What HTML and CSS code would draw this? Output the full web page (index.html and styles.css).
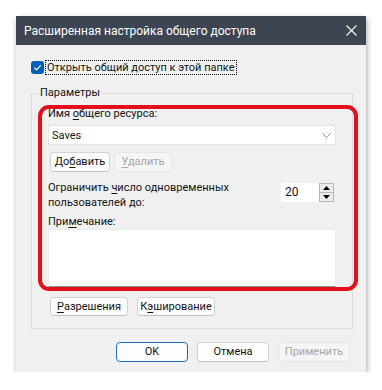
FILE: index.html
```html
<!DOCTYPE html>
<html lang="ru">
<head>
<meta charset="utf-8">
<link rel="stylesheet" href="styles.css">
</head>
<body>
<div class="dialog">
  <div class="titlebar">
    <span class="title">Расширенная настройка общего доступа</span>
    <svg class="close" width="11" height="11" viewBox="0 0 11 11"><path d="M0.5 0.5 L10.5 10.5 M10.5 0.5 L0.5 10.5" stroke="#fff" stroke-width="1.1" fill="none"/></svg>
  </div>
  <div class="content">
    <label class="check-row">
      <span class="checkbox"><svg width="9" height="9" viewBox="0 0 9 9"><path d="M1.3 4.6 L3.6 6.8 L7.8 2.2" stroke="#fff" stroke-width="1.2" fill="none"/></svg></span>
      <span class="focus">Открыть общий доступ к этой папке</span>
    </label>
    <fieldset class="group">
      <legend>Параметры</legend>
      <div class="lbl first">Имя <u>о</u>бщего ресурса:</div>
      <div class="combo"><span>Saves</span>
        <svg width="9" height="5" viewBox="0 0 9 5"><path d="M0.5 0.5 L4.5 4.5 L8.5 0.5" stroke="#9a9a9a" stroke-width="1" fill="none"/></svg>
      </div>
      <div class="btn-row">
        <button class="btn w60">До<u>б</u>авить</button>
        <button class="btn w58 disabled"><u>У</u>далить</button>
      </div>
      <div class="limit-row">
        <div class="limit-text">Ограничить <u>ч</u>исло одновременных<br>пользователей до:</div>
        <div class="spin">
          <span class="spin-val">20</span>
          <span class="spin-btns">
            <span class="spin-btn"><svg width="7" height="4" viewBox="0 0 7 4"><path d="M3.5 0 L7 4 L0 4 Z" fill="#000"/></svg></span>
            <span class="spin-btn"><svg width="7" height="4" viewBox="0 0 7 4"><path d="M0 0 L7 0 L3.5 4 Z" fill="#000"/></svg></span>
          </span>
        </div>
      </div>
      <div class="lbl note-lbl">При<u>м</u>ечание:</div>
      <div class="textarea"></div>
      <div class="btn-row perm-row">
        <button class="btn w78"><u>Р</u>азрешения</button>
        <button class="btn w78">К<u>э</u>ширование</button>
      </div>
    </fieldset>
    <div class="footer">
      <button class="btn fbtn primary">OK</button>
      <button class="btn fbtn">Отмена</button>
      <button class="btn fbtn disabled">Применить</button>
    </div>
  </div>
  <div class="highlight"></div>
</div>
</body>
</html>
```
FILE: styles.css
```css
html, body {
  margin: 0;
  padding: 0;
  background: #ffffff;
}
body {
  font-family: Roboto, "Noto Sans", sans-serif;
  font-size: 11px;
  color: #141414;
}
.dialog {
  position: relative;
  margin: 16px 0 0 16px;
  width: 350px;
  height: 356px;
  background: #f0f0f0;
  box-shadow: 1px 3px 6px rgba(0, 0, 0, 0.35);
  display: flex;
  flex-direction: column;
}
.titlebar {
  height: 29px;
  background: #3d4452;
  color: #fff;
  display: flex;
  align-items: center;
  justify-content: space-between;
  padding: 0 9px 0 8px;
  flex: none;
}
.title {
  font-size: 12px;
}
.content {
  padding: 0 16px 0 15px;
  display: flex;
  flex-direction: column;
}
.check-row {
  margin-top: 16px;
  height: 13px;
  display: flex;
  align-items: center;
  gap: 2px;
}
.checkbox {
  width: 13px;
  height: 13px;
  border-radius: 3px;
  background: #005fb8;
  display: flex;
  align-items: center;
  justify-content: center;
}
.focus {
  outline: 1px dotted #000;
  line-height: 13px;
  padding: 0 1px;
}
.group {
  margin: 11px 0 0 0;
  padding: 0 16px 12px 16px;
  border: 1px solid #dcdcdc;
  width: 322px;
  box-sizing: border-box;
  min-width: 0;
}
.group legend {
  margin-left: -10px;
  padding: 0 2px;
  line-height: 16px;
  font-size: 11px;
}
.lbl {
  line-height: 15px;
}
.lbl.first {
  margin-top: 5px;
}
.combo {
  margin-top: 4px;
  height: 20px;
  background: #fff;
  border: 1px solid #e4e4e4;
  border-radius: 2px;
  box-sizing: border-box;
  display: flex;
  align-items: center;
  justify-content: space-between;
  padding: 0 4px 0 3px;
}
.btn-row {
  display: flex;
  gap: 4px;
  margin-top: 7px;
  padding-left: 2px;
}
.btn {
  font-family: inherit;
  font-size: 11px;
  color: #141414;
  height: 20px;
  padding: 0;
  background: #fdfdfd;
  border: 1px solid #d2d2d2;
  border-bottom-color: #c2c2c2;
  border-radius: 4px;
  box-sizing: border-box;
  line-height: 16px;
}
.btn.disabled {
  color: #a6a6a6;
  background: #f5f5f5;
  border-color: #e6e6e6;
}
.w60 { width: 60px; }
.w58 { width: 58px; }
.w78 { width: 78px; }
.limit-row {
  margin-top: 8px;
  display: flex;
  justify-content: space-between;
  align-items: flex-start;
}
.limit-text {
  line-height: 15px;
}
.spin {
  margin-top: 3px;
  margin-right: 2px;
  width: 53px;
  height: 19px;
  display: flex;
  background: #fff;
}
.spin-val {
  flex: 1;
  padding-left: 4px;
  line-height: 19px;
  font-size: 12px;
}
.spin-btns {
  width: 15px;
  display: flex;
  flex-direction: column;
}
.spin-btn {
  flex: 1;
  background: #ececec;
  border: 1px solid #b8b8b8;
  display: flex;
  align-items: center;
  justify-content: center;
}
.spin-btn + .spin-btn {
  border-top: none;
}
.note-lbl {
  margin-top: 5px;
  line-height: 14px;
}
.textarea {
  height: 58px;
  background: #fff;
  border: 1px solid #ececec;
  border-bottom-color: #8c8c8c;
  box-sizing: border-box;
}
.perm-row {
  margin-top: 10px;
  gap: 9px;
}
.perm-row .btn {
  height: 19px;
  line-height: 15px;
}
.footer {
  margin-top: 13px;
  display: flex;
  justify-content: flex-end;
  gap: 9px;
  margin-right: 0;
}
.fbtn {
  width: 72px;
}
.primary {
  border: 1px solid #1f6fc0;
  background: #fdfdfd;
}
.highlight {
  position: absolute;
  left: 22px;
  top: 89px;
  width: 320px;
  height: 186px;
  box-sizing: border-box;
  border: 4px solid #e3101b;
  border-radius: 11px;
  pointer-events: none;
}
u {
  text-decoration-thickness: 1px;
  text-underline-offset: 2px;
}
```
